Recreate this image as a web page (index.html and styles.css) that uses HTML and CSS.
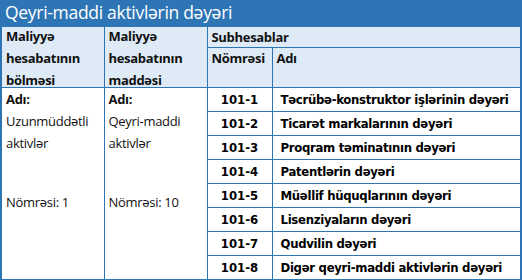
FILE: index.html
```html
<!DOCTYPE html>
<html lang="az">
<head>
<meta charset="utf-8">
<link rel="stylesheet" href="styles.css">
</head>
<body>
<div class="sheet">
  <div class="title">Qeyri-maddi aktivlərin dəyəri</div>
  <table class="grid">
    <colgroup>
      <col class="c1"><col class="c2"><col class="c3"><col class="c4">
    </colgroup>
    <thead>
      <tr class="h1">
        <th rowspan="2" class="hcell"><div class="hwrap">Maliyyə hesabatının bölməsi</div></th>
        <th rowspan="2" class="hcell"><div class="hwrap">Maliyyə hesabatının maddəsi</div></th>
        <th colspan="2" class="hcell sub">Subhesablar</th>
      </tr>
      <tr class="h2">
        <th class="hcell">Nömrəsi</th>
        <th class="hcell">Adı</th>
      </tr>
    </thead>
    <tbody>
      <tr>
        <td rowspan="8" class="side">
          <div class="lbl">Adı:</div>
          <div class="val">Uzunmüddətli aktivlər</div>
          <div class="num">Nömrəsi: 1</div>
        </td>
        <td rowspan="8" class="side">
          <div class="lbl">Adı:</div>
          <div class="val">Qeyri-maddi aktivlər</div>
          <div class="num">Nömrəsi: 10</div>
        </td>
        <td class="code">101-1</td>
        <td class="name">Təcrübə-konstruktor işlərinin dəyəri</td>
      </tr>
      <tr><td class="code">101-2</td><td class="name">Ticarət markalarının dəyəri</td></tr>
      <tr><td class="code">101-3</td><td class="name">Proqram təminatının dəyəri</td></tr>
      <tr><td class="code">101-4</td><td class="name">Patentlərin dəyəri</td></tr>
      <tr><td class="code">101-5</td><td class="name">Müəllif hüquqlarının dəyəri</td></tr>
      <tr><td class="code">101-6</td><td class="name">Lisenziyaların dəyəri</td></tr>
      <tr><td class="code">101-7</td><td class="name">Qudvilin dəyəri</td></tr>
      <tr><td class="code">101-8</td><td class="name">Digər qeyri-maddi aktivlərin dəyəri</td></tr>
    </tbody>
  </table>
</div>
</body>
</html>
```

FILE: styles.css
```css
html, body {
  margin: 0;
  padding: 0;
  background: #ffffff;
}

.sheet {
  width: 522px;
  font-family: "Open Sans", "Liberation Sans", sans-serif;
  color: #111111;
}

.title {
  height: 26px;
  line-height: 25px;
  background: #2e75b6;
  color: #ffffff;
  font-size: 17.5px;
  font-weight: 500;
  padding-left: 5px;
  letter-spacing: -0.3px;
}

.grid {
  width: 522px;
  border-collapse: collapse;
  table-layout: fixed;
  border-left: 2px solid #2e75b6;
  border-right: 2px solid #2e75b6;
  border-bottom: 2px solid #2e75b6;
}

.c1 { width: 103px; }
.c2 { width: 103px; }
.c3 { width: 65px; }
.c4 { width: auto; }

.grid th, .grid td {
  border: 1px solid #2e75b6;
  padding: 0;
}

.hcell {
  background: #deeaf6;
  text-align: left;
  vertical-align: top;
  font-size: 13px;
  font-weight: 700;
  line-height: 20px;
  padding: 0 4px !important;
  letter-spacing: -0.3px;
}

.hwrap {
  height: 60px;
  line-height: 22px;
  margin-top: -2px;
  overflow: visible;
}

.h1 { height: 20px; }
.h2 { height: 40px; }

.grid tbody tr { height: 24px; }

.side {
  vertical-align: top;
  padding: 0 4px !important;
  font-size: 13px;
  line-height: 22px;
  letter-spacing: -0.3px;
}

.lbl { font-weight: 700; }
.val { font-weight: 400; }
.num { margin-top: 37px; font-weight: 400; }

.code {
  text-align: center;
  font-family: "DejaVu Sans Condensed", "DejaVu Sans", sans-serif;
  font-weight: 700;
  font-size: 13px;
  color: #000000;
}

.name {
  padding-left: 8px !important;
  font-family: "DejaVu Sans Condensed", "DejaVu Sans", sans-serif;
  font-weight: 700;
  font-size: 13px;
  color: #000000;
  letter-spacing: -0.3px;
  white-space: nowrap;
}
```
